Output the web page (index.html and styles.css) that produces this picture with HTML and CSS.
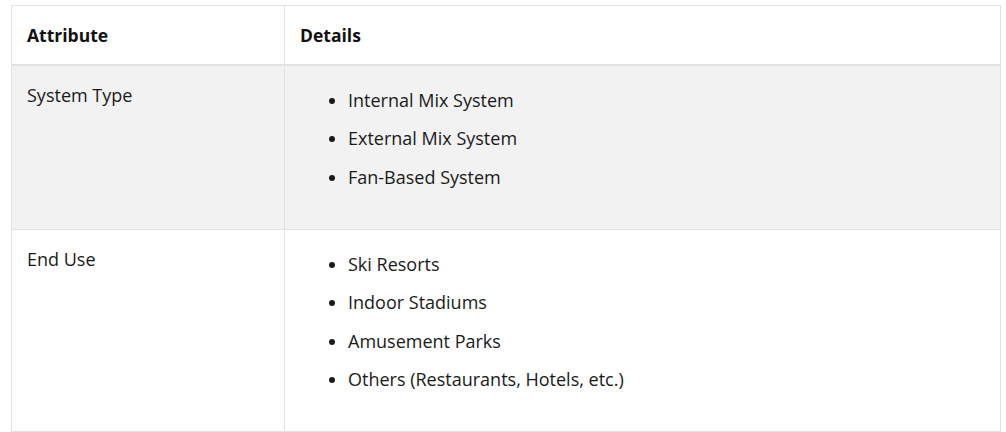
FILE: index.html
```html
<!DOCTYPE html>
<html>
<head>
<meta charset="utf-8">
<link rel="stylesheet" href="styles.css">
</head>
<body>
<div class="wrap">
<table class="tbl">
  <thead>
    <tr><th class="c1">Attribute</th><th class="c2">Details</th></tr>
  </thead>
  <tbody>
    <tr class="alt">
      <td class="c1">System Type</td>
      <td class="c2">
        <ul class="list">
          <li>Internal Mix System</li>
          <li>External Mix System</li>
          <li>Fan-Based System</li>
        </ul>
      </td>
    </tr>
    <tr>
      <td class="c1">End Use</td>
      <td class="c2">
        <ul class="list">
          <li>Ski Resorts</li>
          <li>Indoor Stadiums</li>
          <li>Amusement Parks</li>
          <li>Others (Restaurants, Hotels, etc.)</li>
        </ul>
      </td>
    </tr>
  </tbody>
</table>
</div>
</body>
</html>
```
FILE: styles.css
```css
html, body { margin: 0; padding: 0; background: #fff; }
.wrap { padding: 5px 6px 0 11px; }
.tbl {
  width: 990px;
  border-collapse: collapse;
  font-family: "Open Sans", "Noto Sans", sans-serif;
  font-size: 18px;
  color: #1a1a1a;
}
.tbl th, .tbl td {
  border: 1px solid #e2e2e2;
  text-align: left;
  vertical-align: top;
  padding: 16px 15px;
  line-height: 26px;
}
.tbl th { font-weight: 700; font-size: 17.5px; color: #111; border-bottom: 2px solid #e2e2e2; }
.c1 { width: 242px; }
.alt td { background: #f2f2f2; }
.list { margin: 5px 0 0; padding: 0 0 23px 48px; }
.list li { margin-bottom: 12.4px; }
.list li:last-child { margin-bottom: 0; }
```
